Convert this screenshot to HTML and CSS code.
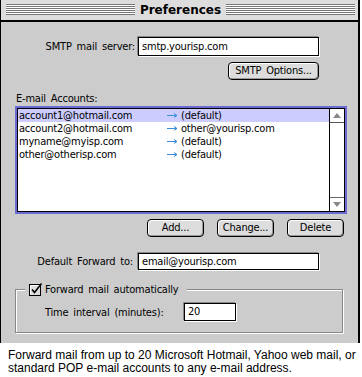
FILE: index.html
```html
<!DOCTYPE html>
<html>

<head>
    <title>Preferences</title>
    <meta charset="utf-8">
    <link rel="stylesheet" href="styles.css">
</head>

<body>
    <div class="window">
        <div class="titlebar">
            <span class="stripes"></span>
            <span class="title">Preferences</span>
            <span class="stripes"></span>
        </div>
        <div class="content">
            <div class="field-row row-smtp">
                <label class="label">SMTP mail server:</label>
                <div class="textbox wide">smtp.yourisp.com</div>
            </div>
            <div class="options-row">
                <button class="btn btn-options">SMTP Options...</button>
            </div>
            <div class="section-label">E-mail Accounts:</div>
            <div class="listbox">
                <div class="list-inner">
                    <div class="list-rows">
                        <div class="list-row selected">
                            <span class="acct">account1@hotmail.com</span>
                            <span class="arrow"><svg width="11" height="7" viewBox="0 0 11 7"><path d="M0 3.5H10M7 1.5L10 3.5L7 5.5" fill="none" stroke="#3a8fd6" stroke-width="1"/></svg></span>
                            <span class="dest">(default)</span>
                        </div>
                        <div class="list-row">
                            <span class="acct">account2@hotmail.com</span>
                            <span class="arrow"><svg width="11" height="7" viewBox="0 0 11 7"><path d="M0 3.5H10M7 1.5L10 3.5L7 5.5" fill="none" stroke="#3a8fd6" stroke-width="1"/></svg></span>
                            <span class="dest">other@yourisp.com</span>
                        </div>
                        <div class="list-row">
                            <span class="acct">myname@myisp.com</span>
                            <span class="arrow"><svg width="11" height="7" viewBox="0 0 11 7"><path d="M0 3.5H10M7 1.5L10 3.5L7 5.5" fill="none" stroke="#3a8fd6" stroke-width="1"/></svg></span>
                            <span class="dest">(default)</span>
                        </div>
                        <div class="list-row">
                            <span class="acct">other@otherisp.com</span>
                            <span class="arrow"><svg width="11" height="7" viewBox="0 0 11 7"><path d="M0 3.5H10M7 1.5L10 3.5L7 5.5" fill="none" stroke="#3a8fd6" stroke-width="1"/></svg></span>
                            <span class="dest">(default)</span>
                        </div>
                    </div>
                    <div class="scrollbar">
                        <div class="scroll-arrow up"><svg width="8" height="5" viewBox="0 0 8 5"><path d="M0 5L4 0L8 5Z" fill="#888"/></svg></div>
                        <div class="track"></div>
                        <div class="scroll-arrow down"><svg width="8" height="5" viewBox="0 0 8 5"><path d="M0 0L4 5L8 0Z" fill="#888"/></svg></div>
                    </div>
                </div>
            </div>
            <div class="button-row">
                <button class="btn">Add...</button>
                <button class="btn">Change...</button>
                <button class="btn">Delete</button>
            </div>
            <div class="field-row row-forward">
                <label class="label">Default Forward to:</label>
                <div class="textbox wide">email@yourisp.com</div>
            </div>
            <fieldset class="group">
                <legend class="group-title">
                    <span class="checkbox"><svg width="14" height="13" viewBox="0 0 14 13"><rect x="0.5" y="1.5" width="11" height="11" fill="#ddd" stroke="#000"/><path d="M1.5 11.5V2.5H10.5" fill="none" stroke="#fff"/><path d="M3 6.5L5.5 9.5L12.5 0.5" fill="none" stroke="#000" stroke-width="1.6"/></svg></span>
                    Forward mail automatically
                </legend>
                <div class="interval-row">
                    <span class="interval-label">Time interval (minutes):</span>
                    <div class="textbox short">20</div>
                </div>
            </fieldset>
        </div>
    </div>
    <p class="caption">Forward mail from up to 20 Microsoft Hotmail, Yahoo web mail, or<br>standard POP e-mail accounts to any e-mail address.</p>
</body>

</html>
```

FILE: styles.css
```css
body {
    margin: 0;
    background: #fff;
    color: #000;
    font-family: "DejaVu Sans Condensed", "DejaVu Sans", sans-serif;
    font-size: 11px;
    letter-spacing: -0.2px;
    word-spacing: 2px;
}

.window {
    width: 357px;
    border-left: 1px solid #000;
    border-right: 2px solid #000;
    background: #ccc;
}

.titlebar {
    height: 20px;
    border-bottom: 2px solid #000;
    background: #ddd;
    display: flex;
    align-items: flex-start;
    gap: 5px;
    padding: 0 3px 0 5px;
}

.stripes {
    flex: 1;
    height: 11px;
    margin-top: 4px;
    background: repeating-linear-gradient(to bottom, #777 0 1px, #fff 1px 2px);
}

.title {
    font-family: "DejaVu Sans", sans-serif;
    font-weight: bold;
    font-size: 12px;
    letter-spacing: 0;
    line-height: 20px;
}

.content {
    padding: 15px 11px 10px 14px;
}

.field-row {
    display: flex;
    align-items: center;
}

.label {
    box-sizing: border-box;
    width: 123px;
    padding-right: 3px;
    text-align: right;
}

.row-forward {
    margin-top: 16px;
}

.row-forward .label {
    padding-right: 5px;
}

.textbox {
    box-sizing: border-box;
    height: 19px;
    line-height: 17px;
    border: 1px solid #000;
    background: #fff;
    padding: 0 3px;
    box-shadow: -1px -1px 0 #888, 1px 1px 0 #fff;
}

.wide {
    width: 181px;
}

.row-forward .textbox {
    height: 17px;
    line-height: 15px;
}

.short {
    width: 52px;
    height: 18px;
    line-height: 16px;
}

.options-row {
    margin-top: 6px;
    padding-left: 213px;
}

.btn {
    box-sizing: border-box;
    width: 57px;
    height: 18px;
    padding: 0;
    border: 1px solid #000;
    border-radius: 4px;
    background: #ddd;
    box-shadow: inset 1px 1px 0 #fff, inset -1px -1px 0 #999;
    font: inherit;
    letter-spacing: inherit;
    word-spacing: inherit;
    line-height: 16px;
    color: #000;
}

.btn-options {
    width: 91px;
}

.section-label {
    margin-top: 12px;
    padding-left: 1px;
    line-height: 13px;
}

.listbox {
    box-sizing: border-box;
    height: 108px;
    margin-top: 1px;
    border: 2px solid #6a6ad2;
}

.list-inner {
    display: flex;
    height: 100%;
    box-sizing: border-box;
    border: 1px solid #000;
    background: #fff;
}

.list-rows {
    flex: 1;
}

.list-row {
    display: flex;
    align-items: center;
    height: 13px;
    line-height: 13px;
}

.list-row.selected {
    background: #ccf;
}

.acct {
    box-sizing: border-box;
    width: 149px;
    padding-left: 1px;
}

.arrow {
    display: flex;
    width: 14px;
}

.scrollbar {
    width: 14px;
    border-left: 1px solid #000;
    display: flex;
    flex-direction: column;
}

.scroll-arrow {
    height: 13px;
    display: flex;
    align-items: center;
    justify-content: center;
}

.scroll-arrow.up {
    border-bottom: 1px solid #555;
}

.scroll-arrow.down {
    border-top: 1px solid #666;
}

.track {
    flex: 1;
}

.button-row {
    display: flex;
    justify-content: flex-end;
    gap: 13px;
    margin-top: 5px;
    padding-right: 3px;
}

.group {
    margin: 13px 4px 0 0;
    padding: 0 0 11px 0;
    border: 1px solid #888;
    box-shadow: inset 1px 1px 0 #fff, 1px 1px 0 #fff;
    min-width: 0;
}

.group-title {
    display: flex;
    align-items: center;
    height: 13px;
    margin-left: 9px;
    padding: 0 8px 0 4px;
    background: #ccc;
}

.checkbox {
    display: flex;
    margin-right: 2px;
}

.interval-row {
    display: flex;
    align-items: center;
    margin-top: 7px;
    padding-left: 29px;
}

.interval-label {
    width: 139px;
}

.caption {
    margin: 0;
    padding: 6px 0 0 8px;
    font-family: "Liberation Sans", Arial, sans-serif;
    font-size: 12px;
    letter-spacing: 0;
    word-spacing: 0;
    line-height: 13px;
}
```
